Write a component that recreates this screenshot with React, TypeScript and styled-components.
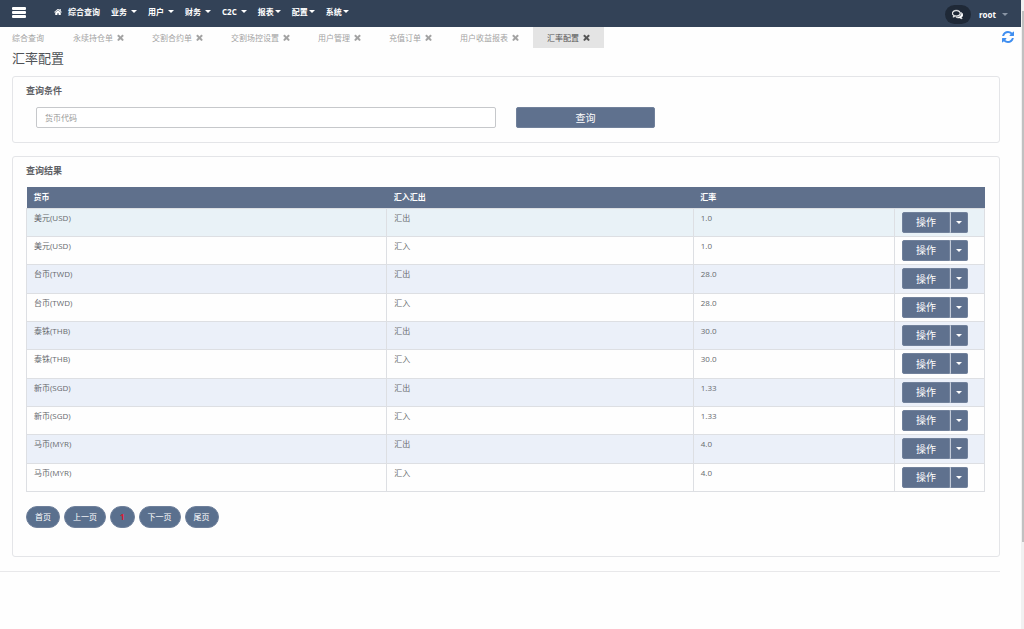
import React from "react";
import styled, { createGlobalStyle, css } from "styled-components";

const GlobalStyle = createGlobalStyle`
  * { box-sizing: border-box; }
  body {
    margin: 0;
    background: #fefefe;
    color: #676a6e;
    font-family: "Open Sans", "Noto Sans CJK SC", sans-serif;
    font-size: 8px;
    line-height: 12px;
  }
  button, input { font-family: inherit; }
  a { color: inherit; text-decoration: none; }
`;

const Page = styled.div`
  min-height: 100vh;
  padding-right: 3px;
`;

const TopBar = styled.header`
  display: flex;
  align-items: center;
  height: 27px;
  padding: 0 13px 0 12px;
  background: #334257;
  color: #fff;
`;

const MenuButton = styled.button`
  display: flex;
  flex-direction: column;
  gap: 1px;
  width: 14px;
  margin-right: 28px;
  padding: 0 0 2px;
  border: 0;
  background: none;
`;

const MenuLine = styled.span`
  height: 3px;
  background: #fff;
  border-radius: 1px;
`;

const Nav = styled.nav`
  display: flex;
  align-items: center;
  gap: 11px;
  padding-bottom: 4px;
  font-weight: 700;
`;

const NavLink = styled.a<{ $gap?: number }>`
  display: flex;
  align-items: center;
  gap: ${(p) => p.$gap ?? 4}px;
  white-space: nowrap;
`;

const Caret = styled.span`
  border: solid transparent;
  border-width: 3px 3px 0;
  border-top-color: currentColor;
`;

const UserArea = styled.div`
  display: flex;
  align-items: center;
  gap: 8px;
  margin-left: auto;
  padding-top: 2px;
`;

const ChatButton = styled.button`
  display: flex;
  align-items: center;
  justify-content: center;
  width: 26px;
  height: 19px;
  padding: 0 0 1px;
  border: 0;
  border-radius: 10px;
  background: #1f2937;
  color: #fff;
`;

const UserButton = styled.button`
  display: flex;
  align-items: center;
  gap: 6px;
  padding: 0;
  border: 0;
  background: none;
  color: #fff;
  font-size: 8px;
  font-weight: 700;
  line-height: 12px;

  ${Caret} {
    color: #8a95a5;
  }
`;

const TabBar = styled.div`
  display: flex;
  align-items: stretch;
  height: 21px;
`;

const Tab = styled.div<{ $active?: boolean; $pinned?: boolean }>`
  display: flex;
  align-items: center;
  gap: 4px;
  padding: 0 14px;
  color: #a3a3a3;
  white-space: nowrap;
  ${(p) => p.$pinned && css`padding: 0 15px 0 12px;`}
  ${(p) => p.$active && css`
    background: #e4e4e4;
    color: #555;
  `}
`;

const CloseButton = styled.button`
  display: flex;
  padding: 0;
  border: 0;
  background: none;
  color: inherit;
`;

const RefreshButton = styled.button`
  display: flex;
  align-items: center;
  margin-left: auto;
  padding: 0 7px 2px 0;
  border: 0;
  background: none;
  color: #3f8ef0;
`;

const Content = styled.main`
  padding: 0 21px 14px 12px;
`;

const Title = styled.h1`
  margin: 0 0 8px;
  color: #505357;
  font-size: 13px;
  font-weight: 400;
  line-height: 20px;
`;

const Panel = styled.section<{ $bottom: number }>`
  padding: 8px 14px ${(p) => p.$bottom}px 13px;
  border: 1px solid #e4e5e8;
  border-radius: 3px;

  & + & {
    margin-top: 13px;
  }
`;

const PanelTitle = styled.h2`
  margin: 0;
  color: #5d6064;
  font-size: 9px;
  font-weight: 700;
  line-height: 12px;
`;

const SearchForm = styled.form`
  display: grid;
  grid-template-columns: 48.5% 14.6%;
  gap: 20px;
  margin: 10px 0 0;
  padding-left: 10px;
`;

const SearchInput = styled.input`
  height: 21px;
  min-width: 0;
  padding: 0 8px;
  border: 1px solid #c6c8cb;
  border-radius: 2px;
  background: #fff;
  font-size: 8px;

  &::placeholder {
    color: #999;
    opacity: 1;
  }
`;

const actionColors = css`
  border: 1px solid #71819b;
  background: #5f718e;
  color: #fff;
`;

const SearchButton = styled.button`
  ${actionColors}
  height: 21px;
  padding: 0;
  border-radius: 2px;
  font-size: 10px;
  line-height: 16px;
`;

const Table = styled.table`
  width: 100%;
  height: 305px;
  margin-top: 10px;
  border-collapse: collapse;
  table-layout: fixed;
`;

const HeadCell = styled.th<{ $width: string }>`
  width: ${(p) => p.$width};
  height: 21px;
  padding: 0 7px;
  background: #5f708c;
  color: #fff;
  font-weight: 700;
  text-align: left;
`;

const Row = styled.tr`
  &:nth-child(odd) {
    background: #ebf0f9;
  }
  &:first-child {
    background: #e9f2f7;
  }
`;

const Cell = styled.td`
  padding: 3px 7px;
  border: 1px solid #dddfe3;
  vertical-align: top;
`;

const SplitButton = styled.div`
  display: flex;
`;

const ActionButton = styled.button`
  ${actionColors}
  width: 48px;
  height: 21px;
  padding: 0;
  border-radius: 2px 0 0 2px;
  font-size: 10px;
  line-height: 16px;
`;

const ToggleButton = styled.button`
  ${actionColors}
  display: flex;
  align-items: center;
  justify-content: center;
  width: 18px;
  height: 21px;
  padding: 0;
  border-left-color: #c3cbd8;
  border-radius: 0 2px 2px 0;
`;

const Pager = styled.nav`
  display: flex;
  gap: 4px;
  margin-top: 14px;
`;

const PageLink = styled.a<{ $current?: boolean }>`
  padding: 4px 8px;
  border: 1px solid #6f809b;
  border-radius: 11px;
  background: #5a708e;
  color: #fff;
  ${(p) => p.$current && css`
    padding: 4px 9px;
    color: #e0182f;
    font-weight: 700;
  `}
`;

const Divider = styled.hr`
  height: 1px;
  margin: 0 21px 0 0;
  border: 0;
  background: #e8e8ea;
`;

const ScrollTrack = styled.div`
  position: fixed;
  top: 0;
  right: 0;
  bottom: 0;
  width: 3px;
  padding-top: 11px;
  background: #f1f1f1;
`;

const ScrollThumb = styled.div`
  width: 2px;
  height: 86%;
  margin-left: 1px;
  background: #c1c1c1;
`;

const paths = {
  home: "M1472 992v480q0 26-19 45t-45 19h-384v-384h-256v384h-384q-26 0-45-19t-19-45v-480q0-1 .5-3t.5-3l575-474 575 474q1 2 1 6zm223-69l-62 74q-8 9-21 11h-3q-13 0-21-7l-692-577-692 577q-12 8-24 7-13-2-21-11l-62-74q-8-10-7-23.5t11-21.5l719-599q32-26 76-26t76 26l244 204v-195q0-14 9-23t23-9h192q14 0 23 9t9 23v408l219 182q10 8 11 21.5t-7 23.5z",
  times: "M1490 1322q0 40-28 68l-136 136q-28 28-68 28t-68-28l-294-294-294 294q-28 28-68 28t-68-28l-136-136q-28-28-28-68t28-68l294-294-294-294q-28-28-28-68t28-68l136-136q28-28 68-28t68 28l294 294 294-294q28-28 68-28t68 28l136 136q28 28 28 68t-28 68l-294 294 294 294q28 28 28 68z",
  refresh: "M1511 928q0 5-1 7-64 268-268 434.5t-478 166.5q-146 0-282.5-55t-243.5-157l-129 129q-19 19-45 19t-45-19-19-45v-448q0-26 19-45t45-19h448q26 0 45 19t19 45-19 45l-137 137q71 66 161 102t187 36q134 0 250-65t186-179q11-17 53-117 8-23 30-23h192q13 0 22.5 9.5t9.5 22.5zm25-800v448q0 26-19 45t-45 19h-448q-26 0-45-19t-19-45 19-45l138-138q-148-137-349-137-134 0-250 65t-186 179q-11 17-53 117-8 23-30 23h-199q-13 0-22.5-9.5t-9.5-22.5v-7q65-268 270-434.5t480-166.5q146 0 284 55.5t245 156.5l130-129q19-19 45-19t45 19 19 45z",
  comments: "M704 384q-153 0-286 52t-211.5 141-78.5 191q0 82 53 158t149 132l97 56-35 84q34-20 62-39l44-31 53 10q78 14 153 14 153 0 286-52t211.5-141 78.5-191-78.5-191-211.5-141-286-52zm0-128q191 0 353.5 68.5t256.5 186.5 94 257-94 257-256.5 186.5-353.5 68.5q-86 0-176-16-124 88-278 128-36 9-86 16h-3q-11 0-20.5-8t-11.5-21q-1-3-1-6.5t.5-6.5 2-6l2.5-5 3.5-5.5 4-5 4.5-5 4-4.5q5-6 23-25t26-29.5 22.5-29 25-38.5 20.5-44q-124-72-195-177t-71-224q0-139 94-257t256.5-186.5 353.5-68.5zm822 1169q10 24 20.5 44t25 38.5 22.5 29 26 29.5 23 25q1 1 4 4.5t4.5 5 4 5 3.5 5.5l2.5 5 2 6 .5 6.5-1 6.5q-3 14-13 22t-22 7q-50-7-86-16-154-40-278-128-90 16-176 16-271 0-472-132 58 4 88 4 161 0 309-45t264-129q125-92 192-212t67-254q0-77-23-152 129 71 204 178t75 230q0 120-71 224.5t-195 176.5z",
};

const viewBoxes: Record<keyof typeof paths, string> = {
  home: "64 128 1664 1536",
  times: "302 238 1188 1316",
  refresh: "0 0 1536 1536",
  comments: "0 128 1792 1664",
};

function Icon({ name, size, bold }: { name: keyof typeof paths; size: number; bold?: boolean }) {
  return (
    <svg
      width={size}
      height={size}
      viewBox={viewBoxes[name]}
      fill="currentColor"
      stroke={bold ? "currentColor" : "none"}
      strokeWidth={70}
      aria-hidden="true"
    >
      <path d={paths[name]} />
    </svg>
  );
}

const menus = [
  { label: "业务" },
  { label: "用户" },
  { label: "财务" },
  { label: "C2C" },
  { label: "报表", gap: 1 },
  { label: "配置", gap: 1 },
  { label: "系统", gap: 1 },
];

const tabs = ["永续持仓单", "交割合约单", "交割场控设置", "用户管理", "充值订单", "用户收益报表", "汇率配置"];

const rates = [
  ["美元(USD)", "1.0"],
  ["台币(TWD)", "28.0"],
  ["泰铢(THB)", "30.0"],
  ["新币(SGD)", "1.33"],
  ["马币(MYR)", "4.0"],
].flatMap(([currency, rate]) => ["汇出", "汇入"].map((direction) => ({ currency, direction, rate })));

const pages = ["首页", "上一页", "1", "下一页", "尾页"];

export default function App() {
  return (
    <Page lang="zh-CN">
      <GlobalStyle />
      <TopBar>
        <MenuButton aria-label="菜单">
          <MenuLine />
          <MenuLine />
          <MenuLine />
        </MenuButton>
        <Nav>
          <NavLink href="#" $gap={6}>
            <Icon name="home" size={8} />
            综合查询
          </NavLink>
          {menus.map((menu) => (
            <NavLink href="#" key={menu.label} $gap={menu.gap}>
              {menu.label}
              <Caret />
            </NavLink>
          ))}
        </Nav>
        <UserArea>
          <ChatButton aria-label="消息">
            <Icon name="comments" size={11} bold />
          </ChatButton>
          <UserButton>
            root
            <Caret />
          </UserButton>
        </UserArea>
      </TopBar>

      <TabBar>
        <Tab $pinned>
          <a href="#">综合查询</a>
        </Tab>
        {tabs.map((tab) => (
          <Tab key={tab} $active={tab === "汇率配置"}>
            <a href="#">{tab}</a>
            <CloseButton aria-label={`关闭${tab}`}>
              <Icon name="times" size={7} />
            </CloseButton>
          </Tab>
        ))}
        <RefreshButton aria-label="刷新">
          <Icon name="refresh" size={12} />
        </RefreshButton>
      </TabBar>

      <Content>
        <Title>汇率配置</Title>
        <Panel $bottom={14}>
          <PanelTitle>查询条件</PanelTitle>
          <SearchForm onSubmit={(event) => event.preventDefault()}>
            <SearchInput type="text" placeholder="货币代码" aria-label="货币代码" />
            <SearchButton type="submit">查询</SearchButton>
          </SearchForm>
        </Panel>

        <Panel $bottom={28}>
          <PanelTitle>查询结果</PanelTitle>
          <Table>
            <thead>
              <tr>
                <HeadCell $width="37.6%">货币</HeadCell>
                <HeadCell $width="32%">汇入汇出</HeadCell>
                <HeadCell $width="21%">汇率</HeadCell>
                <HeadCell $width="9.4%" aria-label="操作" />
              </tr>
            </thead>
            <tbody>
              {rates.map((item) => (
                <Row key={item.currency + item.direction}>
                  <Cell>{item.currency}</Cell>
                  <Cell>{item.direction}</Cell>
                  <Cell>{item.rate}</Cell>
                  <Cell>
                    <SplitButton>
                      <ActionButton>操作</ActionButton>
                      <ToggleButton aria-label="更多操作">
                        <Caret />
                      </ToggleButton>
                    </SplitButton>
                  </Cell>
                </Row>
              ))}
            </tbody>
          </Table>
          <Pager aria-label="分页">
            {pages.map((page) => (
              <PageLink href="#" key={page} $current={page === "1"}>
                {page}
              </PageLink>
            ))}
          </Pager>
        </Panel>
      </Content>
      <Divider />
      <ScrollTrack aria-hidden="true">
        <ScrollThumb />
      </ScrollTrack>
    </Page>
  );
}
